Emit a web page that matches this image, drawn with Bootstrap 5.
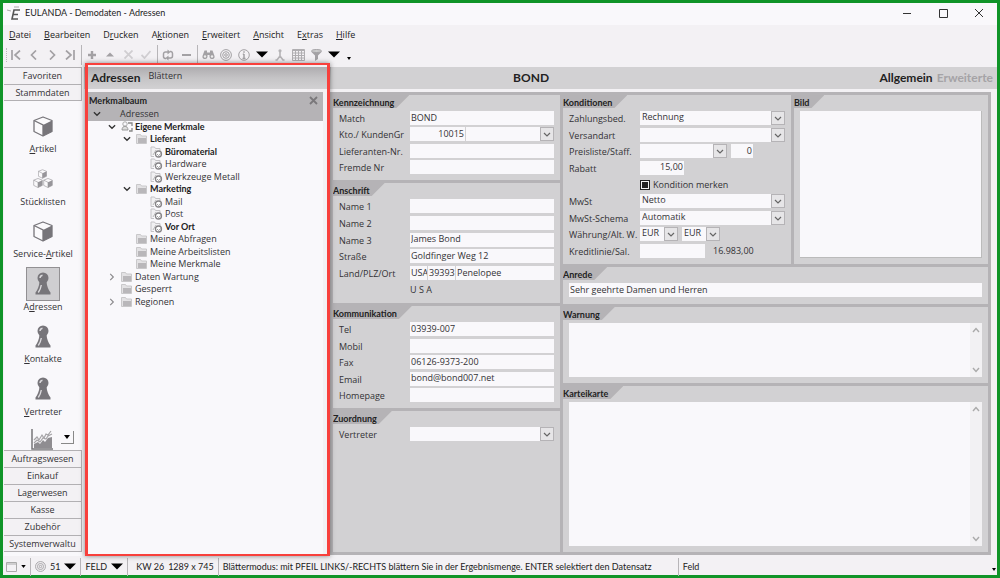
<!DOCTYPE html>
<html lang="de">
<head>
<meta charset="utf-8">
<meta name="viewport" content="width=device-width, initial-scale=1">
<title>EULANDA - Demodaten - Adressen</title>
<link href="https://cdn.jsdelivr.net/npm/bootstrap@5.3.0/dist/css/bootstrap.min.css" rel="stylesheet">
<style>
:root{--frame:#b5b3b6;--panel:#d2d1d3;--paper:#f9f8fb;--chrome:#f3f1f4;--ink:#333235}
body{font-family:"Open Sans",Lato,sans-serif;font-size:9px;line-height:14px;color:var(--ink);background:var(--chrome)}
a{color:inherit;text-decoration:none}
button{font:inherit;color:inherit;background:none;border:0;padding:0}
u{text-underline-offset:1px}
svg{display:block;flex:none}
.app{min-height:100vh;border:3px solid #109428}
.titlebar{height:22px;background:var(--paper);padding:0 0 2px 4px}
.titlebar .caption{color:#222;font-family:Lato,sans-serif}
.winbtn{width:36px;height:20px;color:#222}
.menubar{height:19px;padding-left:6px;gap:13px;color:#222}
.toolbar{height:22px;padding:0 0 1px 1px;color:#a3a1a4}
.grip{width:3px;height:14px;border-right:1px dotted #bbb}
.tool{width:18px;height:18px;display:flex;align-items:center;justify-content:center}
.vsep{width:1px;height:20px;background:#b7b5b8;margin:0 1px 0 2px}
.side{width:78px;background:var(--paper);margin:1px 0 0 1px}
.group-btn{height:17px;border:1px solid #b2b0b3;border-width:1px 1px 0 0;background:var(--chrome);white-space:nowrap;overflow:hidden}
.group-last{border-bottom-width:1px}
.modules{padding-top:8px}
.module{flex:1 1 52px;line-height:12px}
.module .face{width:34px;height:34px;border:1px solid transparent}
.module.active .face{background:#cfced1;border-color:#929093}
.drop{width:13px;height:13px;border:1px solid #888;border-width:0 1px 1px 0}
.work{margin-left:2px}
.head{height:22px;background:var(--panel);margin-top:1px}
.head-left{flex:0 0 27%;padding-left:7px;background:linear-gradient(#aeacaf,#c5c4c6 50%,var(--panel))}
.head-mid{flex:0 0 20%}
.sub-link{line-height:18px}
.big{font-family:Lato,sans-serif;font-size:12px;font-weight:700;color:#222}
.tree-pane{width:240px;padding:3px 1px 0 4px}
.tree-inner{background:var(--paper)}
.tree-head{background:var(--frame);height:16px;padding:0 5px 0 1px;line-height:15px}
.tree{height:200px;display:grid;grid-auto-rows:1fr;margin:0;padding:0;list-style:none}
.tree li{display:flex;align-items:center;padding-left:1px;white-space:nowrap;line-height:12px}
.tree li.lv1{padding-left:16px}.tree li.lv2{padding-left:31px}.tree li.lv3{padding-left:46px}
.tree .slot{width:15px;flex:none;display:flex;justify-content:center}
.tree .slot+.slot{margin-right:1px}
.tree b,.tab-label,.tree-head{font-family:Lato,sans-serif;font-size:9px;font-weight:700;color:#222}
.root{background:var(--frame)}
.forms{background:var(--frame);border:3px solid var(--frame);margin:3px 6px 1px 6px;gap:3px;min-width:0}
.left-col{flex:0 0 227px;gap:3px;min-width:0}
.right-col{gap:3px;min-width:0}
.box{background:var(--panel);display:flex;flex-direction:column}
.tab-label{align-self:flex-start;background:var(--frame);height:13px;line-height:15px;padding-right:15px;clip-path:polygon(0 0,100% 0,calc(100% - 13px) 100%,0 100%)}
.rows{flex:1;display:flex;flex-direction:column;justify-content:space-between;padding:3px 6px 6px 6px}
.line{display:flex;height:14px}
.line>label:first-child,.line>.lbl{width:71px;flex:none;line-height:16px;white-space:nowrap}
.fld{height:14px;min-width:0;border:0;border-radius:0;padding:0 0 2px 1px;background-color:var(--paper);color:var(--ink);font:inherit;line-height:12px;appearance:none;outline:0;display:block}
.fld.text-end{padding-right:1px}
.fld.flex-fill{width:0}
select.fld{padding-left:2px;background-image:url("data:image/svg+xml,%3Csvg xmlns='http://www.w3.org/2000/svg' width='14' height='14'%3E%3Crect x='.5' y='.5' width='13' height='13' fill='%23e6e5e7' stroke='%23b5b3b6'/%3E%3Cpath d='M4 6l3 3 3-3' fill='none' stroke='%23666' stroke-width='1.2'/%3E%3C/svg%3E");background-repeat:no-repeat;background-position:right center}
.tick{appearance:none;width:10px;height:10px;border:1px solid #222;background:#222;box-shadow:inset 0 0 0 1px #f4f4f4;margin:2px 3px 0 0;flex:none}
.photo{background:var(--paper);margin:3px 6px 6px 6px;border:1px solid #bbb;border-width:0 1px 1px 0}
.note{position:relative;margin:3px 6px 6px 6px;flex:1;display:flex}
.note textarea{height:auto;width:100%;resize:none;overflow:hidden}
.rail{position:absolute;right:0;top:0;bottom:0;width:12px;background:#f2f1f3;display:flex;flex-direction:column;justify-content:space-between;align-items:center;padding:4px 0}
.statusbar{height:19px;padding:2px 1px 0 3px;font-family:Lato,sans-serif;font-size:9px;color:#222}
.statusbar .vsep{height:18px;margin:0}
.message{width:455px}
.marker{position:absolute;left:1px;top:-3px;bottom:0;width:245px;border:3px solid #f8403c;border-width:2px 3px;pointer-events:none;box-shadow:0 0 5px rgba(60,60,60,.6)}
</style>
</head>
<body>
<svg width="0" height="0" class="position-absolute" aria-hidden="true">
<defs>
<symbol id="cube" viewBox="0 0 20 21"><path d="M10 1L19 4.500V15.500L10 20 1 15.500V4.500z" fill="#fbfafc" stroke="#77757a" stroke-width="1.300" stroke-linejoin="round"/><path d="M10 9L19 4.500V15.500L10 20z" fill="#77757a"/><path d="M1 4.500L10 9V20" fill="none" stroke="#77757a" stroke-width="1.300"/></symbol>
<symbol id="pawn" viewBox="0 0 16 23"><circle cx="8" cy="6" r="5.500" fill="#77757a"/><path d="M4.500 9.500h7L12 13c.8 3 2 5.500 3.500 7.500v2H.500v-2C2 18.500 3.200 16 4 13z" fill="#77757a"/><path d="M5 6A3 3 0 0 1 7.500 3.300M6.300 13C5.800 16 4.800 18.500 3.300 20.500" fill="none" stroke="#dcdbde" stroke-width="1.400"/></symbol>
<symbol id="folder" viewBox="0 0 11 10"><path d="M.5 9.500V.500h4l1 1.500h5v7.500z" fill="#e3e2e4" stroke="#c9c8ca"/><path d="M2 4h8v5H2z" fill="#b9b7ba"/></symbol>
<symbol id="query" viewBox="0 0 13 12"><path d="M1 10.500V1h3.500l1 1.500H10V5M1 10.500h3" fill="#f1f0f2" stroke="#c4c3c6"/><circle cx="8.500" cy="8" r="3" fill="#fff" stroke="#858386" stroke-width="1.300"/><path d="M7 8l1.500 1.500L11.500 7" fill="none" stroke="#a09ea1"/><path d="M3 9L6 4" stroke="#bbb"/></symbol>
<symbol id="down" viewBox="0 0 9 6"><path d="M1 1l3.500 3.500L8 1" fill="none" stroke="#333" stroke-width="1.500"/></symbol>
<symbol id="right" viewBox="0 0 6 9"><path d="M1 1l3.500 3.500L1 8" fill="none" stroke="#8b898c" stroke-width="1.300"/></symbol>
<symbol id="wedge" viewBox="0 0 12 7"><path d="M0 .5h12L6 6.500z" fill="#000"/></symbol>
<symbol id="target" viewBox="0 0 12 12"><g fill="none" stroke="#a3a1a4"><circle cx="6" cy="6" r="5.400"/><circle cx="6" cy="6" r="3.300"/><circle cx="6" cy="6" r="1.300"/></g></symbol>
</defs></svg>

<div class="app d-flex flex-column">
<header class="titlebar d-flex align-items-center">
<svg width="14" height="15" viewBox="0 0 14 15" class="me-1"><path d="M13 4H7L5 13h6M6 8.500h5" fill="none" stroke="#555" stroke-width="1.600"/><path d="M0 4l4 1M7 1h5" stroke="#aaa"/></svg>
<span class="caption me-auto">EULANDA - Demodaten - Adressen</span>
<button class="winbtn d-flex align-items-center justify-content-center" aria-label="Minimieren"><svg width="10" height="10" viewBox="0 0 10 10"><path d="M1 5.500h8" stroke="#333"/></svg></button>
<button class="winbtn d-flex align-items-center justify-content-center" aria-label="Maximieren"><svg width="9" height="9" viewBox="0 0 9 9"><path d="M.5 .5h8v8h-8z" fill="none" stroke="#333"/></svg></button>
<button class="winbtn d-flex align-items-center justify-content-center" aria-label="Schließen"><svg width="10" height="10" viewBox="0 0 10 10"><path d="M1 1l8 8M9 1L1 9" stroke="#333"/></svg></button>
</header>
<nav class="menubar d-flex align-items-center">
<a href="#"><u>D</u>atei</a><a href="#"><u>B</u>earbeiten</a><a href="#">D<u>r</u>ucken</a><a href="#">A<u>k</u>tionen</a><a href="#"><u>E</u>rweitert</a><a href="#"><u>A</u>nsicht</a><a href="#">E<u>x</u>tras</a><a href="#"><u>H</u>ilfe</a>
</nav>
<div class="toolbar d-flex align-items-center">
<span class="grip"></span>
<button class="tool" aria-label="Erster"><svg width="10" height="10" viewBox="0 0 10 10"><path d="M1 0v10M9 0.500L4 5l5 4.500" fill="none" stroke="currentColor" stroke-width="1.700"/></svg></button>
<button class="tool" aria-label="Zurück"><svg width="10" height="10" viewBox="0 0 10 10"><path d="M7 .5L2.500 5 7 9.500" fill="none" stroke="currentColor" stroke-width="1.700"/></svg></button>
<button class="tool" aria-label="Weiter"><svg width="10" height="10" viewBox="0 0 10 10"><path d="M3 .5L7.500 5 3 9.500" fill="none" stroke="currentColor" stroke-width="1.700"/></svg></button>
<button class="tool" aria-label="Letzter"><svg width="10" height="10" viewBox="0 0 10 10"><path d="M9 0v10M1 .5L6 5 1 9.500" fill="none" stroke="currentColor" stroke-width="1.700"/></svg></button>
<span class="vsep"></span>
<button class="tool" aria-label="Neu"><svg width="8" height="8" viewBox="0 0 8 8"><path d="M4 0v8M0 4h8" stroke="currentColor" stroke-width="2.400"/></svg></button>
<button class="tool" aria-label="Bearbeiten"><svg width="8" height="5" viewBox="0 0 8 5"><path d="M0 4.500L4 .5l4 4z" fill="currentColor"/></svg></button>
<button class="tool" aria-label="Abbrechen"><svg width="9" height="9" viewBox="0 0 9 9"><path d="M.5 .5l8 8M8.500 .5l-8 8" stroke="#d0ced1" stroke-width="1.800"/></svg></button>
<button class="tool" aria-label="Speichern"><svg width="10" height="9" viewBox="0 0 10 9"><path d="M.5 5L3.500 8 9.500 1" fill="none" stroke="#d0ced1" stroke-width="1.800"/></svg></button>
<span class="vsep"></span>
<button class="tool" aria-label="Aktualisieren"><svg width="12" height="12" viewBox="0 0 12 12"><path d="M4 9.500H3A2 2 0 0 1 1.500 8V5A2 2 0 0 1 3.500 3H7M8 2.500h1A2 2 0 0 1 10.500 4.500V7A2 2 0 0 1 8.500 9H5" fill="none" stroke="currentColor" stroke-width="1.500"/><path d="M5.500 .5v5L8.500 3zM6.500 6.500v5L3.500 9z" fill="currentColor"/></svg></button>
<button class="tool" aria-label="Löschen"><svg width="9" height="4" viewBox="0 0 9 4"><path d="M0 2h9" stroke="currentColor" stroke-width="2"/></svg></button>
<span class="vsep"></span>
<button class="tool" aria-label="Suchen"><svg width="13" height="11" viewBox="0 0 13 11"><path d="M2.500 1.500h2.500v2h3v-2h2.500L12.500 7A2.500 2.500 0 1 1 7.500 8V6h-2v2A2.500 2.500 0 1 1 .5 7z" fill="currentColor"/><circle cx="3" cy="7.500" r="1.200" fill="#eee"/><circle cx="10" cy="7.500" r="1.200" fill="#eee"/></svg></button>
<button class="tool" aria-label="Ziel"><svg width="12" height="12"><use href="#target"/></svg></button>
<button class="tool" aria-label="Info"><svg width="12" height="12" viewBox="0 0 12 12"><circle cx="6" cy="6" r="5.300" fill="none" stroke="currentColor"/><path d="M6 2.200v1.600M6 5v4.500M4.800 5.200H6M4.500 9.500h3" stroke="currentColor" stroke-width="1.500"/></svg></button>
<button class="tool" aria-label="Auswahl"><svg width="12" height="7"><use href="#wedge"/></svg></button>
<button class="tool" aria-label="Person"><svg width="10" height="12" viewBox="0 0 10 12"><circle cx="5" cy="1.800" r="1.600" fill="#b5b3b6"/><path d="M5 3v4L2 11H.5M5 7l3 4h1.500" fill="none" stroke="#b5b3b6" stroke-width="1.600"/></svg></button>
<button class="tool" aria-label="Tabelle"><svg width="13" height="12" viewBox="0 0 13 12"><path d="M.5 .5h12v11H.5zM.5 1.500h12M.5 4h12M.5 6.500h12M.5 9h12M3.500 1v11M6.500 1v11M9.500 1v11" fill="none" stroke="#b0aeb1"/></svg></button>
<button class="tool" aria-label="Filter"><svg width="11" height="12" viewBox="0 0 11 12"><path d="M0 2.500L4 6.500V12l3-2V6.500l4-4z" fill="currentColor"/><ellipse cx="5.500" cy="2" rx="5" ry="1.500" fill="#ccc" stroke="currentColor"/></svg></button>
<button class="tool" aria-label="Filterauswahl"><svg width="12" height="7"><use href="#wedge"/></svg></button>
<svg width="4" height="3" viewBox="0 0 4 3" class="mt-2 ms-1"><path d="M0 0h4L2 3z" fill="#000"/></svg>
</div>

<div class="d-flex flex-grow-1">
<aside class="side d-flex flex-column">
<button class="group-btn">Favoriten</button>
<button class="group-btn group-last">Stammdaten</button>
<div class="modules d-flex flex-column flex-grow-1">
<a href="#" class="module d-flex flex-column align-items-center"><span class="face d-flex align-items-center justify-content-center"><svg width="20" height="21"><use href="#cube"/></svg></span><span><u>A</u>rtikel</span></a>
<a href="#" class="module d-flex flex-column align-items-center"><span class="face d-flex align-items-center justify-content-center"><svg width="20" height="20" viewBox="0 0 20 20"><g opacity=".75"><svg x="5" y="0" width="9" height="10"><use href="#cube"/></svg><svg x="0" y="9" width="10" height="10"><use href="#cube"/></svg><svg x="10" y="9" width="10" height="10"><use href="#cube"/></svg></g></svg></span><span>Stücklisten</span></a>
<a href="#" class="module d-flex flex-column align-items-center"><span class="face d-flex align-items-center justify-content-center"><svg width="20" height="21"><use href="#cube"/></svg></span><span>Service-<u>A</u>rtikel</span></a>
<a href="#" class="module active d-flex flex-column align-items-center"><span class="face d-flex align-items-center justify-content-center"><svg width="16" height="23"><use href="#pawn"/></svg></span><span>A<u>d</u>ressen</span></a>
<a href="#" class="module d-flex flex-column align-items-center"><span class="face d-flex align-items-center justify-content-center"><svg width="16" height="23"><use href="#pawn"/></svg></span><span><u>K</u>ontakte</span></a>
<a href="#" class="module d-flex flex-column align-items-center"><span class="face d-flex align-items-center justify-content-center"><svg width="16" height="23"><use href="#pawn"/></svg></span><span><u>V</u>ertreter</span></a>
<div class="d-flex align-items-center justify-content-end pe-2 gap-2"><svg width="22" height="22" viewBox="0 0 22 22" class="mt-1"><path d="M1 1v20h21" fill="none" stroke="#77757a" stroke-width="1.500"/><path d="M3 20v-4l4-2 2 2 3-4 2 2 3-4 4-1v11z" fill="#8f8d91"/><path d="M3 12l3-3 2 3 3-5 2 3 2-4 2 1 3-4M3 15l3-3 3 2 3-4 3 1 2-3 4-2" fill="none" stroke="#a5a3a6" stroke-width="1.200"/></svg><button class="drop d-flex align-items-center justify-content-center" aria-label="Weitere"><svg width="6" height="4" viewBox="0 0 6 4"><path d="M0 0h6L3 4z" fill="#000"/></svg></button></div>
</div>
<button class="group-btn">Auftragswesen</button>
<button class="group-btn">Einkauf</button>
<button class="group-btn">Lagerwesen</button>
<button class="group-btn">Kasse</button>
<button class="group-btn">Zubehör</button>
<button class="group-btn group-last">Systemverwaltu</button>
<div class="pb-1"></div>
</aside>

<main class="work d-flex flex-column flex-grow-1 position-relative">
<div class="head d-flex">
<div class="head-left d-flex"><span class="big me-2 pt-1">Adressen</span><a href="#" class="sub-link">Blättern</a></div>
<div class="head-mid"></div>
<span class="big align-self-center me-auto">BOND</span>
<a href="#" class="big align-self-center me-1">Allgemein</a><a href="#" class="big align-self-center me-1" style="color:#a5a3a6">Erweiterte</a>
</div>
<div class="d-flex flex-grow-1">
<section class="tree-pane d-flex flex-column flex-shrink-0">
<div class="tree-inner flex-grow-1">
<div class="tree-head d-flex align-items-center"><span class="me-auto">Merkmalbaum</span><button aria-label="Baum schließen"><svg width="9" height="9" viewBox="0 0 9 9"><path d="M1 1l7 7M8 1L1 8" stroke="#7a787b" stroke-width="1.800"/></svg></button></div>
<ul class="tree">
<li class="root"><span class="slot"><svg width="8" height="6"><use href="#down"/></svg></span><span class="slot"></span>Adressen</li>
<li class="lv1"><span class="slot"><svg width="8" height="6"><use href="#down"/></svg></span><span class="slot"><svg width="12" height="11" viewBox="0 0 12 11"><circle cx="4" cy="3" r="2.200" fill="none" stroke="#aaa"/><path d="M1 9c0-5 6-5 6 0z" fill="#ddd" stroke="#999"/><path d="M7 2h4v3M11 7v3H8" fill="none" stroke="#888" stroke-width="1.300"/></svg></span><b>Eigene Merkmale</b></li>
<li class="lv2"><span class="slot"><svg width="8" height="6"><use href="#down"/></svg></span><span class="slot"><svg width="11" height="10"><use href="#folder"/></svg></span><b>Lieferant</b></li>
<li class="lv3"><span class="slot"></span><span class="slot"><svg width="13" height="12"><use href="#query"/></svg></span><b>Büromaterial</b></li>
<li class="lv3"><span class="slot"></span><span class="slot"><svg width="13" height="12"><use href="#query"/></svg></span>Hardware</li>
<li class="lv3"><span class="slot"></span><span class="slot"><svg width="13" height="12"><use href="#query"/></svg></span>Werkzeuge Metall</li>
<li class="lv2"><span class="slot"><svg width="8" height="6"><use href="#down"/></svg></span><span class="slot"><svg width="11" height="10"><use href="#folder"/></svg></span><b>Marketing</b></li>
<li class="lv3"><span class="slot"></span><span class="slot"><svg width="13" height="12"><use href="#query"/></svg></span>Mail</li>
<li class="lv3"><span class="slot"></span><span class="slot"><svg width="13" height="12"><use href="#query"/></svg></span>Post</li>
<li class="lv3"><span class="slot"></span><span class="slot"><svg width="13" height="12"><use href="#query"/></svg></span><b>Vor Ort</b></li>
<li class="lv2"><span class="slot"></span><span class="slot"><svg width="11" height="10"><use href="#folder"/></svg></span>Meine Abfragen</li>
<li class="lv2"><span class="slot"></span><span class="slot"><svg width="11" height="10"><use href="#folder"/></svg></span>Meine Arbeitslisten</li>
<li class="lv2"><span class="slot"></span><span class="slot"><svg width="11" height="10"><use href="#folder"/></svg></span>Meine Merkmale</li>
<li class="lv1"><span class="slot"><svg width="6" height="8"><use href="#right"/></svg></span><span class="slot"><svg width="11" height="10"><use href="#folder"/></svg></span>Daten Wartung</li>
<li class="lv1"><span class="slot"></span><span class="slot"><svg width="11" height="10"><use href="#folder"/></svg></span>Gesperrt</li>
<li class="lv1"><span class="slot"><svg width="6" height="8"><use href="#right"/></svg></span><span class="slot"><svg width="11" height="10"><use href="#folder"/></svg></span>Regionen</li>
</ul>
</div>
</section>

<form class="forms d-flex flex-grow-1">
<div class="left-col d-flex flex-column">
<section class="box" style="min-height:85px"><span class="tab-label">Kennzeichnung</span>
<div class="rows">
<div class="line"><label for="match">Match</label><input id="match" class="fld flex-fill" value="BOND"></div>
<div class="line"><label for="kto">Kto./ KundenGr</label><input id="kto" class="fld text-end" style="width:55px;margin-right:1px" value="10015"><select class="fld flex-fill" aria-label="Kundengruppe"><option></option></select></div>
<div class="line"><label for="lief">Lieferanten-Nr.</label><input id="lief" class="fld flex-fill"></div>
<div class="line"><label for="fremd">Fremde Nr</label><input id="fremd" class="fld flex-fill"></div>
</div></section>
<section class="box" style="min-height:120px"><span class="tab-label">Anschrift</span>
<div class="rows">
<div class="line"><label for="n1">Name 1</label><input id="n1" class="fld flex-fill"></div>
<div class="line"><label for="n2">Name 2</label><input id="n2" class="fld flex-fill"></div>
<div class="line"><label for="n3">Name 3</label><input id="n3" class="fld flex-fill" value="James Bond"></div>
<div class="line"><label for="str">Straße</label><input id="str" class="fld flex-fill" value="Goldfinger Weg 12"></div>
<div class="line" style="column-gap:1px"><label for="land" style="margin-right:-1px">Land/PLZ/Ort</label><input id="land" class="fld" style="width:17px" value="USA"><input class="fld" style="width:27px" aria-label="PLZ" value="39393"><input class="fld flex-fill" aria-label="Ort" value="Penelopee"></div>
<div class="line"><span class="lbl"></span><span>U S A</span></div>
</div></section>
<section class="box" style="min-height:102px"><span class="tab-label">Kommunikation</span>
<div class="rows">
<div class="line"><label for="tel">Tel</label><input id="tel" class="fld flex-fill" value="03939-007"></div>
<div class="line"><label for="mob">Mobil</label><input id="mob" class="fld flex-fill"></div>
<div class="line"><label for="fax">Fax</label><input id="fax" class="fld flex-fill" value="06126-9373-200"></div>
<div class="line"><label for="mail">Email</label><input id="mail" class="fld flex-fill" value="bond@bond007.net"></div>
<div class="line"><label for="home">Homepage</label><input id="home" class="fld flex-fill"></div>
</div></section>
<section class="box flex-grow-1"><span class="tab-label">Zuordnung</span>
<div class="rows">
<div class="line"><label for="vert">Vertreter</label><select id="vert" class="fld flex-fill"><option></option></select></div>
</div></section>
</div>

<div class="right-col d-flex flex-column flex-grow-1">
<div class="d-flex" style="gap:3px">
<section class="box flex-shrink-0" style="width:228px;min-height:169px"><span class="tab-label">Konditionen</span>
<div class="rows">
<div class="line"><label for="zb">Zahlungsbed.</label><select id="zb" class="fld flex-fill"><option>Rechnung</option></select></div>
<div class="line"><label for="va">Versandart</label><select id="va" class="fld flex-fill"><option></option></select></div>
<div class="line"><label for="pl">Preisliste/Staff.</label><select id="pl" class="fld" style="width:87px"><option></option></select><input class="fld text-end ms-1" style="width:22px" aria-label="Staffel" value="0"></div>
<div class="line"><label for="rab">Rabatt</label><input id="rab" class="fld text-end" style="width:44px" value="15,00"></div>
<div class="line"><span class="lbl"></span><input type="checkbox" class="tick" id="km" checked><label for="km">Kondition merken</label></div>
<div class="line"><label for="mw">MwSt</label><select id="mw" class="fld flex-fill"><option>Netto</option></select></div>
<div class="line"><label for="ms">MwSt-Schema</label><select id="ms" class="fld flex-fill"><option>Automatik</option></select></div>
<div class="line"><label for="wa">Währung/Alt. W.</label><select id="wa" class="fld me-1" style="width:38px"><option>EUR</option></select><select class="fld" style="width:38px" aria-label="Alternative Währung"><option>EUR</option></select></div>
<div class="line"><label for="kl">Kreditlinie/Sal.</label><input id="kl" class="fld me-2" style="width:65px"><output>16.983,00</output></div>
</div></section>
<section class="box flex-grow-1"><span class="tab-label">Bild</span><div class="photo flex-grow-1"></div></section>
</div>
<section class="box" style="min-height:37px"><label for="anr" class="tab-label">Anrede</label>
<div class="rows"><input id="anr" class="fld w-100" value="Sehr geehrte Damen und Herren"></div></section>
<section class="box" style="min-height:76px"><label for="warn" class="tab-label">Warnung</label>
<div class="note"><textarea id="warn" class="fld"></textarea><div class="rail"><svg width="8" height="6" viewBox="0 0 8 6"><path d="M1 5l3-3.500L7 5" fill="none" stroke="#aaa" stroke-width="1.400"/></svg><svg width="8" height="6" viewBox="0 0 8 6"><path d="M1 1l3 3.500L7 1" fill="none" stroke="#aaa" stroke-width="1.400"/></svg></div></div></section>
<section class="box flex-grow-1"><label for="kart" class="tab-label">Karteikarte</label>
<div class="note"><textarea id="kart" class="fld"></textarea><div class="rail"><svg width="8" height="6" viewBox="0 0 8 6"><path d="M1 5l3-3.500L7 5" fill="none" stroke="#aaa" stroke-width="1.400"/></svg><svg width="8" height="6" viewBox="0 0 8 6"><path d="M1 1l3 3.500L7 1" fill="none" stroke="#aaa" stroke-width="1.400"/></svg></div></div></section>
</div>
</form>
</div>
<div class="marker"></div>
</main>
</div>

<footer class="statusbar d-flex align-items-center">
<svg width="11" height="10" viewBox="0 0 11 10"><path d="M.5 .5h10v9H.5zM.5 2h10" fill="none" stroke="#aaa"/></svg>
<svg width="5" height="3" viewBox="0 0 6 4" class="mx-1"><path d="M0 0h6L3 4z" fill="#000"/></svg>
<span class="vsep"></span>
<svg width="11" height="11" class="mx-1"><use href="#target"/></svg><span>51</span><svg width="12" height="7" class="mx-1"><use href="#wedge"/></svg>
<span class="vsep"></span><span class="ms-1">FELD</span><svg width="12" height="7" class="mx-1"><use href="#wedge"/></svg>
<span class="vsep"></span><span class="ms-2 me-1">KW 26</span><span class="me-1">1289 x 745</span>
<span class="vsep"></span><span class="message ms-1">Blättermodus: mit PFEIL LINKS/-RECHTS blättern Sie in der Ergebnismenge. ENTER selektiert den Datensatz</span>
<span class="vsep"></span><span class="ms-1 me-auto">Feld</span>
<svg width="4" height="3" viewBox="0 0 4 3" class="align-self-end mb-1"><path d="M0 0h4L2 3z" fill="#000"/></svg>
</footer>
</div>
<script src="https://cdn.jsdelivr.net/npm/bootstrap@5.3.0/dist/js/bootstrap.bundle.min.js"></script>
</body>
</html>
